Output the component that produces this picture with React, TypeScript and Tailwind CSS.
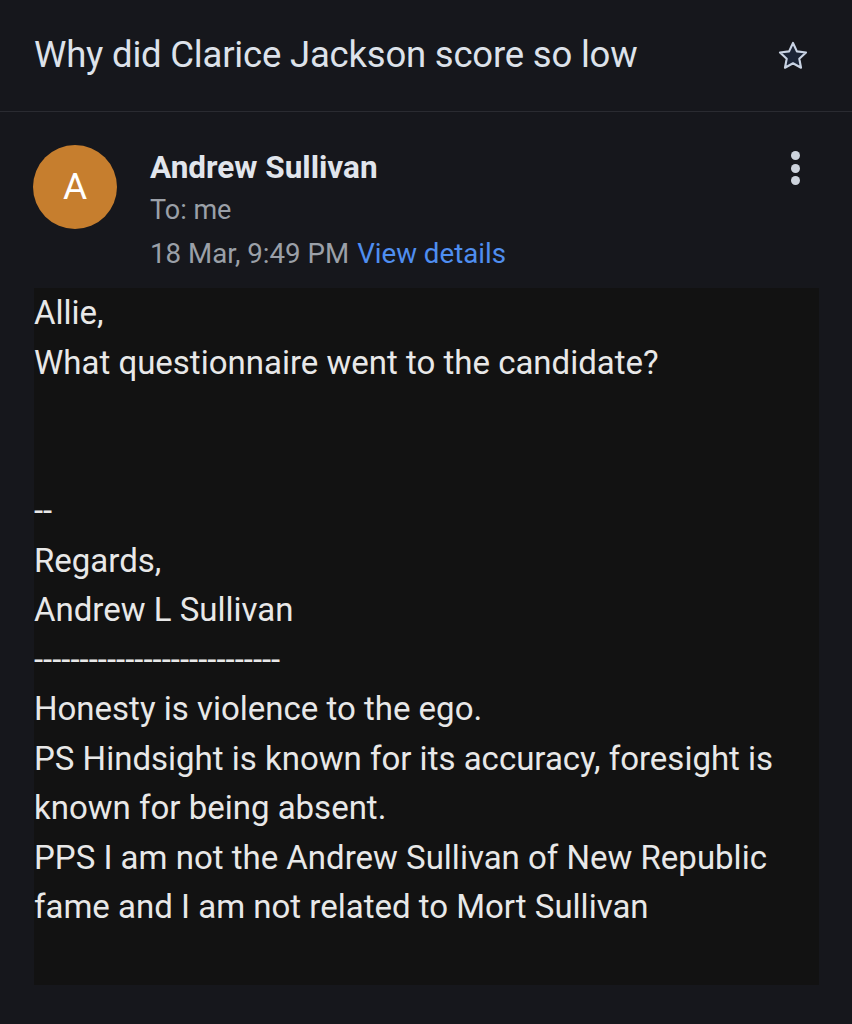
const bodyLines = [
  'Allie,',
  'What questionnaire went to the candidate?',
  '',
  '',
  '--',
  'Regards,',
  'Andrew L Sullivan',
  '---------------------------',
  'Honesty is violence to the ego.',
  'PS Hindsight is known for its accuracy, foresight is',
  'known for being absent.',
  'PPS I am not the Andrew Sullivan of New Republic',
  'fame and I am not related to Mort Sullivan',
]

function StarIcon() {
  return (
    <svg width="34" height="34" viewBox="0 0 24 24" fill="#1b2436" stroke="#c9d3e3" strokeWidth="1.5" strokeLinejoin="round">
      <path d="M12 2.8l2.75 5.9 6.45.78-4.76 4.44 1.23 6.38L12 17.1l-5.67 3.2 1.23-6.38L2.8 9.48l6.45-.78z" />
    </svg>
  )
}

export default function App() {
  return (
    <div className="min-h-[1024px] w-[852px] bg-[#16171c] font-['Roboto',sans-serif]">
      <div className="flex h-[112px] items-center justify-between border-b border-[#2a2b31] pl-[34px] pr-[42px]">
        <h1 className="text-[36.5px] font-normal leading-none tracking-[-0.2px] text-[#dde2ea]">
          Why did Clarice Jackson score so low
        </h1>
        <StarIcon />
      </div>

      <div className="flex pl-[33px] pr-[52px] pt-[33px]">
        <div className="flex h-[84px] w-[84px] shrink-0 items-center justify-center rounded-full bg-[#c67e2e] text-[37px] text-white">
          A
        </div>
        <div className="ml-[33px] flex-1">
          <div className="flex h-[46px] items-center text-[31.5px] font-bold text-[#e1e5ec]">Andrew Sullivan</div>
          <div className="flex h-[38px] items-center text-[27px] text-[#9ba0a8]">To: me</div>
          <div className="flex h-[50px] items-center text-[27.7px] text-[#9ba0a8]">
            18 Mar, 9:49 PM <span className="ml-[8px] text-[#4f8ef0]">View details</span>
          </div>
        </div>
        <div className="flex flex-col items-center gap-[3.5px] pt-[6px]">
          <span className="h-[9px] w-[9px] rounded-full bg-[#cdd3dc]" />
          <span className="h-[9px] w-[9px] rounded-full bg-[#cdd3dc]" />
          <span className="h-[9px] w-[9px] rounded-full bg-[#cdd3dc]" />
        </div>
      </div>

      <div className="ml-[34px] mt-[9px] h-[697px] w-[785px] bg-[#121212]">
        {bodyLines.map((line, i) => (
          <div key={i} className="h-[49.5px] text-[33px] leading-[49.5px] text-[#e8e8e8] whitespace-pre">
            {line}
          </div>
        ))}
      </div>
    </div>
  )
}
